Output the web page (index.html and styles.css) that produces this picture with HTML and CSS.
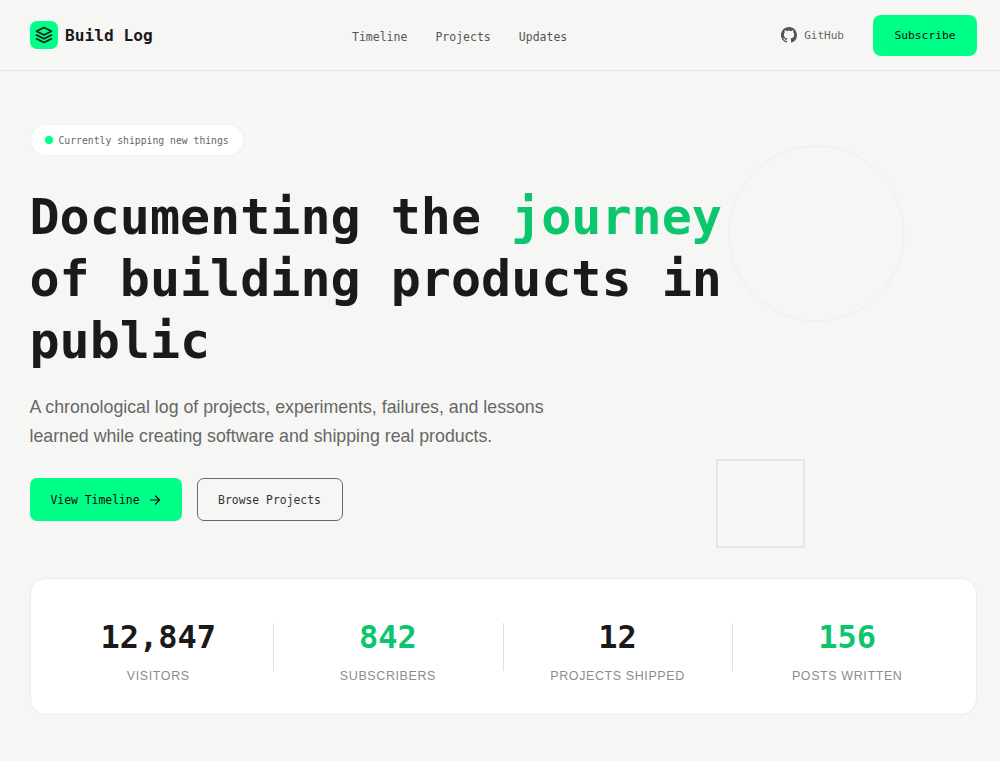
FILE: index.html
```html
<!DOCTYPE html>
<html lang="en">
  <head>
    <meta charset="UTF-8" />
    <meta name="viewport" content="width=device-width, initial-scale=1.0" />
    <title>Build Log</title>
    <link rel="stylesheet" href="styles.css">
  </head>
  <body>
    <header class="topbar">
      <a class="brand" href="#">
        <span class="brand-icon">
          <svg width="18" height="18" viewBox="0 0 24 24" fill="none" stroke="#1a1a1a" stroke-width="2.2" stroke-linecap="round" stroke-linejoin="round">
            <path d="M12 2 2 7l10 5 10-5-10-5Z" />
            <path d="m2 12 10 5 10-5" />
            <path d="m2 17 10 5 10-5" />
          </svg>
        </span>
        <span class="brand-name">Build Log</span>
      </a>
      <nav class="nav">
        <a href="#">Timeline</a>
        <a href="#">Projects</a>
        <a href="#">Updates</a>
      </nav>
      <div class="topbar-right">
        <a class="github" href="#">
          <svg width="16" height="16" viewBox="0 0 16 16" fill="#555">
            <path d="M8 0C3.58 0 0 3.58 0 8c0 3.54 2.29 6.53 5.47 7.59.4.07.55-.17.55-.38 0-.19-.01-.82-.01-1.49-2.01.37-2.53-.49-2.69-.94-.09-.23-.48-.94-.82-1.13-.28-.15-.68-.52-.01-.53.63-.01 1.08.58 1.23.82.72 1.21 1.87.87 2.33.66.07-.52.28-.87.51-1.07-1.78-.2-3.64-.89-3.64-3.95 0-.87.31-1.59.82-2.15-.08-.2-.36-1.02.08-2.12 0 0 .67-.21 2.2.82.64-.18 1.32-.27 2-.27s1.36.09 2 .27c1.53-1.04 2.2-.82 2.2-.82.44 1.1.16 1.92.08 2.12.51.56.82 1.27.82 2.15 0 3.07-1.87 3.75-3.65 3.95.29.25.54.73.54 1.48 0 1.07-.01 1.93-.01 2.2 0 .21.15.46.55.38A8.01 8.01 0 0 0 16 8c0-4.42-3.58-8-8-8Z" />
          </svg>
          GitHub
        </a>
        <a class="btn-subscribe" href="#">Subscribe</a>
      </div>
    </header>

    <main class="page">
      <section class="hero">
        <div class="deco-circle"></div>
        <div class="deco-square"></div>

        <div class="pill"><span class="pill-dot"></span>Currently shipping new things</div>
        <h1>Documenting the <span class="green">journey</span> of building products in public</h1>
        <p class="lead">A chronological log of projects, experiments, failures, and lessons learned while creating software and shipping real products.</p>
        <div class="actions">
          <a class="btn btn-primary" href="#">
            View Timeline
            <svg width="12" height="12" viewBox="0 0 24 24" fill="none" stroke="#0a0a0a" stroke-width="2.4" stroke-linecap="round" stroke-linejoin="round">
              <path d="M3 12h18" />
              <path d="m13 4 8 8-8 8" />
            </svg>
          </a>
          <a class="btn btn-outline" href="#">Browse Projects</a>
        </div>
      </section>

      <section class="stats">
        <div class="stat">
          <div class="stat-value">12,847</div>
          <div class="stat-label">Visitors</div>
        </div>
        <div class="stat">
          <div class="stat-value green">842</div>
          <div class="stat-label">Subscribers</div>
        </div>
        <div class="stat">
          <div class="stat-value">12</div>
          <div class="stat-label">Projects Shipped</div>
        </div>
        <div class="stat">
          <div class="stat-value green">156</div>
          <div class="stat-label">Posts Written</div>
        </div>
      </section>
    </main>
  </body>
</html>
```

FILE: styles.css
```css
* {
  box-sizing: border-box;
}
body {
  margin: 0;
  min-height: 761px;
  background: #f6f6f4;
  color: #1a1a1a;
  font-family: "Liberation Sans", Arial, sans-serif;
}
a {
  color: inherit;
  text-decoration: none;
}
.green {
  color: #0cc66e;
}

.topbar {
  height: 71px;
  padding: 0 23px 0 29.5px;
  display: flex;
  align-items: center;
  border-bottom: 1px solid #e4e4e2;
  font-family: "DejaVu Sans Mono", monospace;
}
.brand {
  display: flex;
  align-items: center;
  gap: 7.5px;
  width: 322.5px;
}
.brand-icon {
  width: 28px;
  height: 28px;
  border-radius: 7px;
  background: #00ff88;
  display: flex;
  align-items: center;
  justify-content: center;
}
.brand-name {
  padding-top: 1px;
  font-size: 16.2px;
  font-weight: 700;
}
.nav {
  display: flex;
  gap: 28px;
  padding-top: 3px;
  font-size: 11.5px;
  color: #555;
}
.topbar-right {
  margin-left: auto;
  display: flex;
  align-items: center;
  gap: 29px;
}
.github {
  display: flex;
  align-items: center;
  gap: 7px;
  font-size: 11px;
  color: #666;
}
.btn-subscribe {
  width: 104px;
  height: 41px;
  border-radius: 8px;
  background: #00ff88;
  display: flex;
  align-items: center;
  justify-content: center;
  font-size: 11.3px;
  color: #0a0a0a;
}

.page {
  padding: 0 23px 0 29.5px;
}
.hero {
  position: relative;
  padding-top: 53px;
}
.deco-circle {
  position: absolute;
  left: 698.5px;
  top: 74px;
  width: 177px;
  height: 177px;
  border: 2px solid rgba(0, 255, 136, 0.05);
  border-radius: 50%;
}
.deco-square {
  position: absolute;
  left: 686.5px;
  top: 388px;
  width: 89px;
  height: 89px;
  border: 2px solid #e6e6e4;
}
.pill {
  display: inline-flex;
  align-items: center;
  gap: 6px;
  height: 32px;
  padding: 0 14px;
  background: #fff;
  border: 1px solid #f1f1ef;
  border-radius: 16px;
  font-family: "DejaVu Sans Mono", monospace;
  font-size: 9.75px;
  color: #666;
}
.pill-dot {
  width: 8px;
  height: 8px;
  border-radius: 50%;
  background: #00ff88;
}
h1 {
  margin: 30px 0 0;
  width: 700px;
  font-family: "DejaVu Sans Mono", monospace;
  font-size: 50px;
  line-height: 62px;
  font-weight: 700;
}
.lead {
  margin: 21px 0 0;
  width: 520px;
  font-size: 17.76px;
  line-height: 28.8px;
  color: #666;
}
.actions {
  margin-top: 27px;
  display: flex;
  gap: 15px;
}
.btn {
  height: 43px;
  padding-top: 1px;
  border-radius: 7px;
  display: flex;
  align-items: center;
  justify-content: center;
  font-family: "DejaVu Sans Mono", monospace;
  font-size: 11.4px;
  color: #0a0a0a;
}
.btn-primary {
  width: 152px;
  gap: 9px;
  background: #00ff88;
}
.btn-outline {
  width: 146px;
  border: 1px solid #666;
  color: #333;
}

.stats {
  margin-top: 57px;
  height: 137px;
  display: grid;
  grid-template-columns: repeat(4, 1fr);
  align-items: center;
  padding: 9px 14px 0 13px;
  background: #fff;
  border: 1px solid #ececea;
  border-radius: 16px;
}
.stat {
  position: relative;
  text-align: center;
}
.stat + .stat::before {
  content: "";
  position: absolute;
  left: 0;
  top: 5px;
  width: 1px;
  height: 48px;
  background: #e0e0de;
}
.stat-value {
  font-family: "DejaVu Sans Mono", monospace;
  font-size: 32px;
  line-height: 38px;
  font-weight: 700;
}
.stat-label {
  margin-top: 12px;
  font-size: 12.5px;
  line-height: 16px;
  letter-spacing: 0.6px;
  text-transform: uppercase;
  color: #8c8c8c;
}
```
